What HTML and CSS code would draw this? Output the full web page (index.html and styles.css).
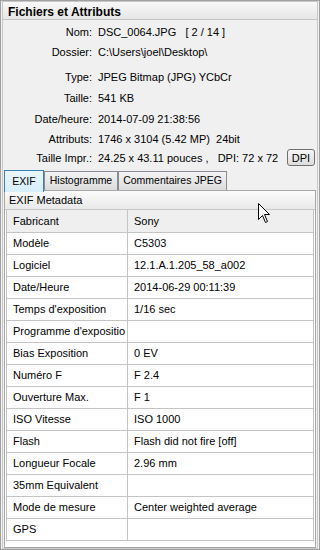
FILE: index.html
```html
<!DOCTYPE html>
<html>

<head>
    <title>Fichiers et Attributs</title>
    <link rel="stylesheet" href="styles.css">
</head>

<body>
    <div class="window">
        <div class="pane">
            <div class="title">Fichiers et Attributs</div>

            <div class="info">
                <div class="row h20"><span class="label">Nom:</span><span class="value">DSC_0064.JPG   [ 2 / 14 ]</span></div>
                <div class="row h20"><span class="label">Dossier:</span><span class="value">C:\Users\joel\Desktop\</span></div>
                <div class="row h21 gap"><span class="label">Type:</span><span class="value">JPEG Bitmap (JPG) YCbCr</span></div>
                <div class="row h21"><span class="label">Taille:</span><span class="value">541 KB</span></div>
                <div class="row h21"><span class="label">Date/heure:</span><span class="value">2014-07-09 21:38:56</span></div>
                <div class="row h19"><span class="label">Attributs:</span><span class="value">1746 x 3104 (5.42 MP)  24bit</span></div>
                <div class="row h19"><span class="label">Taille Impr.:</span><span class="value">24.25 x 43.11 pouces ,   DPI: 72 x 72</span><button class="dpi">DPI</button></div>
            </div>

            <div class="tabs">
                <div class="tab active w40">EXIF</div>
                <div class="tab w74">Histogramme</div>
                <div class="tab w109">Commentaires JPEG</div>
            </div>

            <div class="panel">
                <div class="meta-head">EXIF Metadata</div>
                <table class="exif">
                    <tr class="first"><td>Fabricant</td><td>Sony</td></tr>
                    <tr><td>Modèle</td><td>C5303</td></tr>
                    <tr><td>Logiciel</td><td>12.1.A.1.205_58_a002</td></tr>
                    <tr><td>Date/Heure</td><td>2014-06-29 00:11:39</td></tr>
                    <tr><td>Temps d'exposition</td><td>1/16 sec</td></tr>
                    <tr><td>Programme d'expositio</td><td></td></tr>
                    <tr><td>Bias Exposition</td><td>0 EV</td></tr>
                    <tr><td>Numéro F</td><td>F 2.4</td></tr>
                    <tr><td>Ouverture Max.</td><td>F 1</td></tr>
                    <tr><td>ISO Vitesse</td><td>ISO 1000</td></tr>
                    <tr><td>Flash</td><td>Flash did not fire [off]</td></tr>
                    <tr><td>Longueur Focale</td><td>2.96 mm</td></tr>
                    <tr><td>35mm Equivalent</td><td></td></tr>
                    <tr><td>Mode de mesure</td><td>Center weighted average</td></tr>
                    <tr><td>GPS</td><td></td></tr>
                </table>
            </div>
        </div>

        <svg class="cursor" width="13" height="21" viewBox="0 0 13 21">
            <path d="M0.5,0.5 L0.5,16.5 L4.5,12.5 L7.5,19.5 L9.5,18.5 L6.5,11.5 L11.5,11.5 Z" fill="#fff" stroke="#000" stroke-width="1" />
        </svg>
    </div>
</body>

</html>
```

FILE: styles.css
```css
* {
    box-sizing: border-box;
}

body {
    margin: 0;
    font-family: "Liberation Sans", Arial, sans-serif;
    font-size: 11px;
    color: #000;
    background: #f0f0f0;
}

.window {
    position: relative;
    width: 320px;
    height: 550px;
    border: 1px solid #a0a0a0;
    background: #f0f0f0;
    display: flex;
    flex-direction: column;
}

.pane {
    flex: 1;
    margin: 0 1px 0 1px;
    border: 1px solid #c8c8c8;
    padding: 0 1px 0 1px;
    display: flex;
    flex-direction: column;
}

.title {
    height: 18px;
    margin: 0 -1px;
    padding: 3px 0 0 5px;
    font-size: 12px;
    font-weight: bold;
    background: linear-gradient(#f8f8f8, #e6e6e6);
    border-bottom: 1px solid #c4c4c4;
}

.info {
    padding-top: 2px;
}

.row {
    display: flex;
    align-items: center;
    white-space: pre;
}

.h19 {
    height: 19px;
}

.h20 {
    height: 20px;
}

.h21 {
    height: 21px;
}

.gap {
    margin-top: 4px;
}

.label {
    width: 88px;
    text-align: right;
}

.value {
    padding-left: 6px;
    flex: 1;
}

.dpi {
    width: 28px;
    height: 17px;
    margin-right: 1px;
    padding: 0;
    font-family: "Liberation Sans", Arial, sans-serif;
    font-size: 11px;
    color: #000;
    border: 1px solid #707070;
    border-radius: 3px;
    background: linear-gradient(#f6f6f6, #dddddd);
}

.tabs {
    height: 20px;
    margin-top: 3px;
    display: flex;
    align-items: flex-end;
    font-size: 10.5px;
}

.tab {
    height: 19px;
    line-height: 17px;
    text-align: center;
    border: 1px solid #898c95;
    border-bottom: none;
    background: linear-gradient(#f3f3f3, #dcdcdc);
    white-space: nowrap;
}

.tab.active {
    position: relative;
    z-index: 1;
    height: 22px;
    margin-bottom: -2px;
    line-height: 20px;
    border-color: #3c7fb1;
    background: linear-gradient(#eaf6fd, #d7eefb);
}

.w40 {
    width: 40px;
}

.w74 {
    width: 74px;
}

.w109 {
    width: 109px;
}

.panel {
    flex: 1;
    border: 1px solid #a8a8a8;
    background: #fff;
    padding: 0 1px;
}

.meta-head {
    height: 19px;
    line-height: 19px;
    padding-left: 4px;
    margin: 0 -1px;
    background: linear-gradient(#fbfbfb, #e9e9e9);
    border-bottom: 1px solid #c8c8c8;
}

.exif {
    width: 100%;
    border-collapse: collapse;
}

.exif td {
    height: 22px;
    padding: 0 0 0 6px;
    border: 1px solid #c4c4c4;
    border-top: none;
    white-space: nowrap;
    overflow: hidden;
}

.exif td:first-child {
    width: 121px;
    max-width: 121px;
}

.exif tr.first td {
    background: #efefef;
}

.cursor {
    position: absolute;
    left: 257px;
    top: 202px;
}
```
